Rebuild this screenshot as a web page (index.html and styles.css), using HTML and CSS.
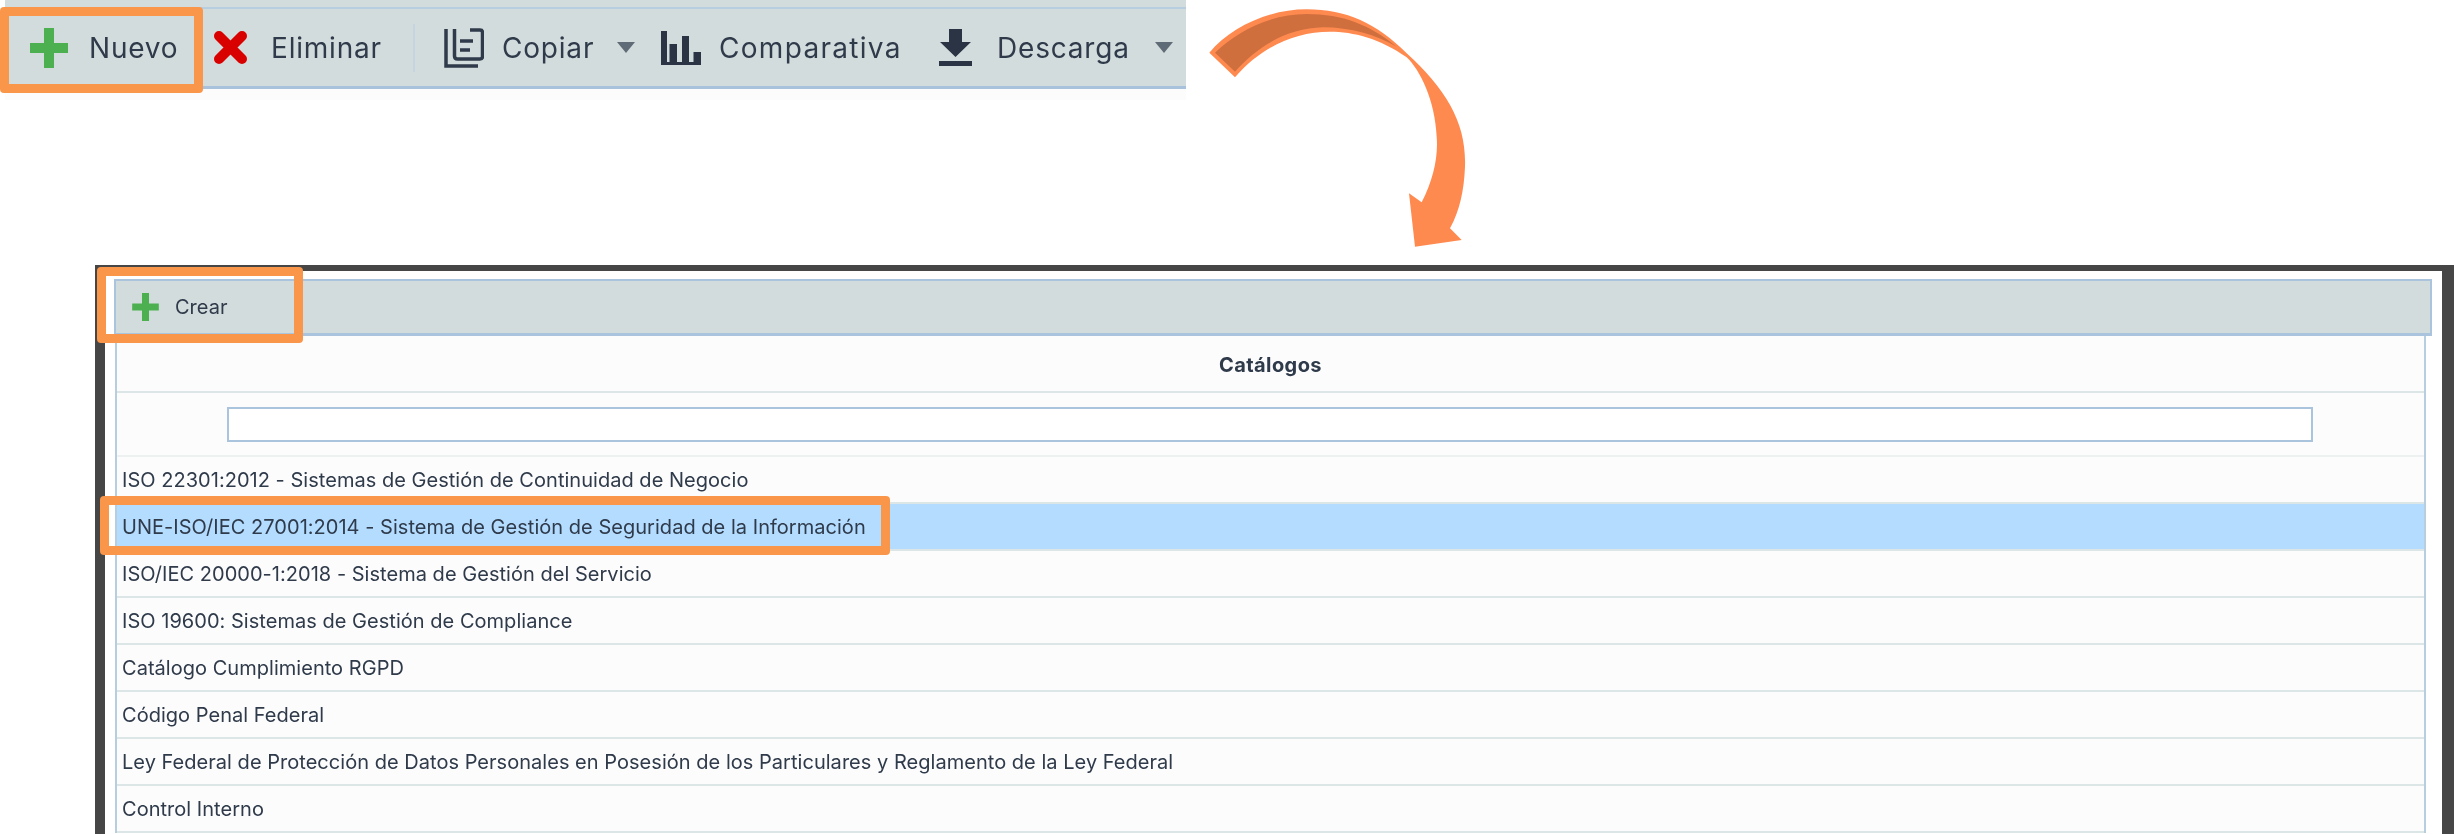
FILE: index.html
```html
<!DOCTYPE html>
<html lang="es">
<head>
  <meta charset="UTF-8">
  <title>Catálogos</title>
  <link rel="stylesheet" href="styles.css">
</head>
<body>

<div class="toolbar">
  <div class="tool tool-new">
    <svg class="icon icon-plus" viewBox="0 0 38 40"><path d="M14 0h10v15h14v10H24v15H14V25H0V15h14z"/></svg>
    <span>Nuevo</span>
  </div>
  <div class="tool tool-delete">
    <svg class="icon icon-x" viewBox="0 0 35 35"><path d="M6 6 29 29M29 6 6 29"/></svg>
    <span>Eliminar</span>
  </div>
  <div class="separator"></div>
  <div class="tool tool-copy">
    <svg class="icon icon-copy" viewBox="0 0 40 40">
      <path d="M2 1V38H34"/>
      <path d="M10.500 1V28q0 3 3 3H36q2.500 0 2.500-2.500V4.500q0-2.500-2.500-2.500H26"/>
      <path d="M16 13h13M16 22h10"/>
    </svg>
    <span>Copiar</span>
    <i class="caret"></i>
  </div>
  <div class="tool tool-chart">
    <svg class="icon icon-chart" viewBox="0 0 40 34"><path d="M0 0h6v34H0zM8.500 13H16v21H8.500zM21 5h7v29h-7zM32.500 21H40v13h-7.500zM0 31h40v3H0z"/></svg>
    <span>Comparativa</span>
  </div>
  <div class="tool tool-download">
    <svg class="icon icon-download" viewBox="0 0 33 37"><path d="M10 0h13v13h9L16.500 28 1 13h9zM0 32h33v5H0z"/></svg>
    <span>Descarga</span>
    <i class="caret"></i>
  </div>
  <div class="highlight highlight-new"></div>
</div>

<svg class="arrow" viewBox="0 0 1020 780">
  <path class="arrow-body" d="M88 158C150 85 260 28 380 28C500 28 590 70 680 160C800 270 860 370 855 500C852 570 840 630 810 685L845 720L705 740L687 580L725 607C760 540 775 470 770 410C765 300 720 210 680 172C600 115 520 95 450 95C340 95 240 145 165 232Z"/>
  <path class="arrow-fold" d="M105 158C170 95 270 42 380 42C490 42 570 75 650 140C590 105 510 82 430 82C330 85 240 130 165 215Z"/>
</svg>

<div class="window">
  <div class="window-toolbar">
    <div class="create">
      <svg class="icon icon-plus-small" viewBox="0 0 38 40"><path d="M14 0h10v15h14v10H24v15H14V25H0V15h14z"/></svg>
      <span>Crear</span>
    </div>
    <div class="highlight highlight-create"></div>
  </div>

  <div class="catalogs">
    <div class="catalogs-title"><span>Catálogos</span></div>
    <div class="catalogs-filter"><input type="text"></div>
    <div class="row"><span>ISO 22301:2012 - Sistemas de Gestión de Continuidad de Negocio</span></div>
    <div class="row row-selected">
      <span>UNE-ISO/IEC 27001:2014 - Sistema de Gestión de Seguridad de la Información</span>
      <div class="highlight highlight-row"></div>
    </div>
    <div class="row"><span>ISO/IEC 20000-1:2018 - Sistema de Gestión del Servicio</span></div>
    <div class="row"><span>ISO 19600: Sistemas de Gestión de Compliance</span></div>
    <div class="row"><span>Catálogo Cumplimiento RGPD</span></div>
    <div class="row"><span>Código Penal Federal</span></div>
    <div class="row"><span>Ley Federal de Protección de Datos Personales en Posesión de los Particulares y Reglamento de la Ley Federal</span></div>
    <div class="row"><span>Control Interno</span></div>
  </div>
</div>

</body>
</html>
```

FILE: styles.css
```css
* {
  margin: 0;
  padding: 0;
  box-sizing: border-box;
}

html, body {
  height: 834px;
  overflow: hidden;
}

body {
  position: relative;
  background: #fff;
  color: #2f3a4a;
  font-family: Inter, 'Noto Sans', sans-serif;
}

/* top toolbar */
.toolbar {
  position: relative;
  width: 1181px;
  height: 82px;
  margin-top: 7px;
  margin-left: 5px;
  padding-left: 25px;
  display: grid;
  grid-template-columns: 183px 200px 31px 217px 278px 229px;
  align-items: center;
  background: #d3dcdc;
  border-top: 2px solid #b7cde0;
  border-bottom: 3px solid #a9c2dc;
  box-shadow: 0 -7px 0 #d3dcdc, 0 11px 0 #fcfcfc;
  font-size: 28px;
  letter-spacing: 0.8px;
}

.tool {
  display: flex;
  align-items: center;
  height: 48px;
}

.tool span {
  filter: blur(0.3px);
}

.tool-new { gap: 21px; }
.tool-delete { gap: 23px; }
.tool-copy { gap: 18px; padding-right: 26px; }
.tool-chart { gap: 18px; }
.tool-chart span { letter-spacing: 1.3px; }
.tool-download { gap: 25px; padding-right: 5px; }

.tool .caret {
  margin-left: auto;
}

.separator {
  width: 2px;
  height: 48px;
  background: #c5d4de;
}

.caret {
  width: 0;
  height: 0;
  border-left: 9px solid transparent;
  border-right: 9px solid transparent;
  border-top: 11px solid #5f6b76;
}

.icon { flex: none; }

.icon-plus { width: 38px; height: 40px; fill: #4caf50; }
.icon-x { width: 35px; height: 35px; stroke: #d90000; stroke-width: 10; stroke-linecap: round; fill: none; }
.icon-copy { width: 40px; height: 40px; fill: none; stroke: #2f3a4a; stroke-width: 3.5; }
.icon-chart { width: 40px; height: 34px; fill: #2a3444; }
.icon-download { width: 33px; height: 37px; fill: #2a3444; }

/* orange marks that sit over the screenshot */
.highlight {
  position: absolute;
  border: 9px solid #f9964a;
  border-radius: 4px;
  pointer-events: none;
}

.highlight-new { left: -5px; top: -2px; width: 203px; height: 86px; }
.highlight-create { left: -19px; top: -14px; width: 206px; height: 76px; }
.highlight-row { left: -17px; top: -8px; width: 790px; height: 59px; }

.arrow {
  position: absolute;
  left: 1180px;
  top: 0;
  width: 340px;
  height: 260px;
}

.arrow-body { fill: #ff8a50; }
.arrow-fold { fill: #cf6f3e; }

/* catalog window */
.window {
  position: relative;
  margin: 176px 0 0 95px;
  width: 2359px;
  height: 600px;
  padding: 8px 10px 0 9px;
  background: #fff;
  border-style: solid;
  border-color: #464646;
  border-width: 6px 12px 0 10px;
}

.window-toolbar {
  position: relative;
  height: 57px;
  display: flex;
  align-items: center;
  padding-left: 16px;
  background: #d3dcdc;
  border: 2px solid #a9c4dc;
  border-bottom-width: 3px;
  font-size: 20px;
}

.create {
  display: flex;
  align-items: center;
  gap: 16px;
}

.create span { filter: blur(0.3px); }

.icon-plus-small { width: 27px; height: 28px; fill: #4caf50; }

.catalogs {
  width: 2311px;
  margin-left: 1px;
  border-left: 2px solid #b7cde0;
  border-right: 2px solid #b7cde0;
  background: #fcfcfc;
  font-size: 20px;
  letter-spacing: 0.03px;
}

.catalogs span { filter: blur(0.3px); }

.catalogs-title {
  height: 57px;
  padding-top: 2px;
  display: flex;
  align-items: center;
  justify-content: center;
  font-weight: 700;
  letter-spacing: 0.4px;
  border-bottom: 2px solid #dde6e6;
}

.catalogs-filter {
  height: 64px;
  padding: 14px 110px 0 110px;
  border-bottom: 2px solid #eef1f1;
}

.catalogs-filter input {
  display: block;
  width: 2086px;
  height: 35px;
  background: #fff;
  border: 2px solid #a9c4dc;
}

.row {
  position: relative;
  height: 47px;
  padding-left: 5px;
  display: flex;
  align-items: center;
  border-bottom: 2px solid #dde6e6;
}

.row-selected {
  background: #b3dcff;
}
```
